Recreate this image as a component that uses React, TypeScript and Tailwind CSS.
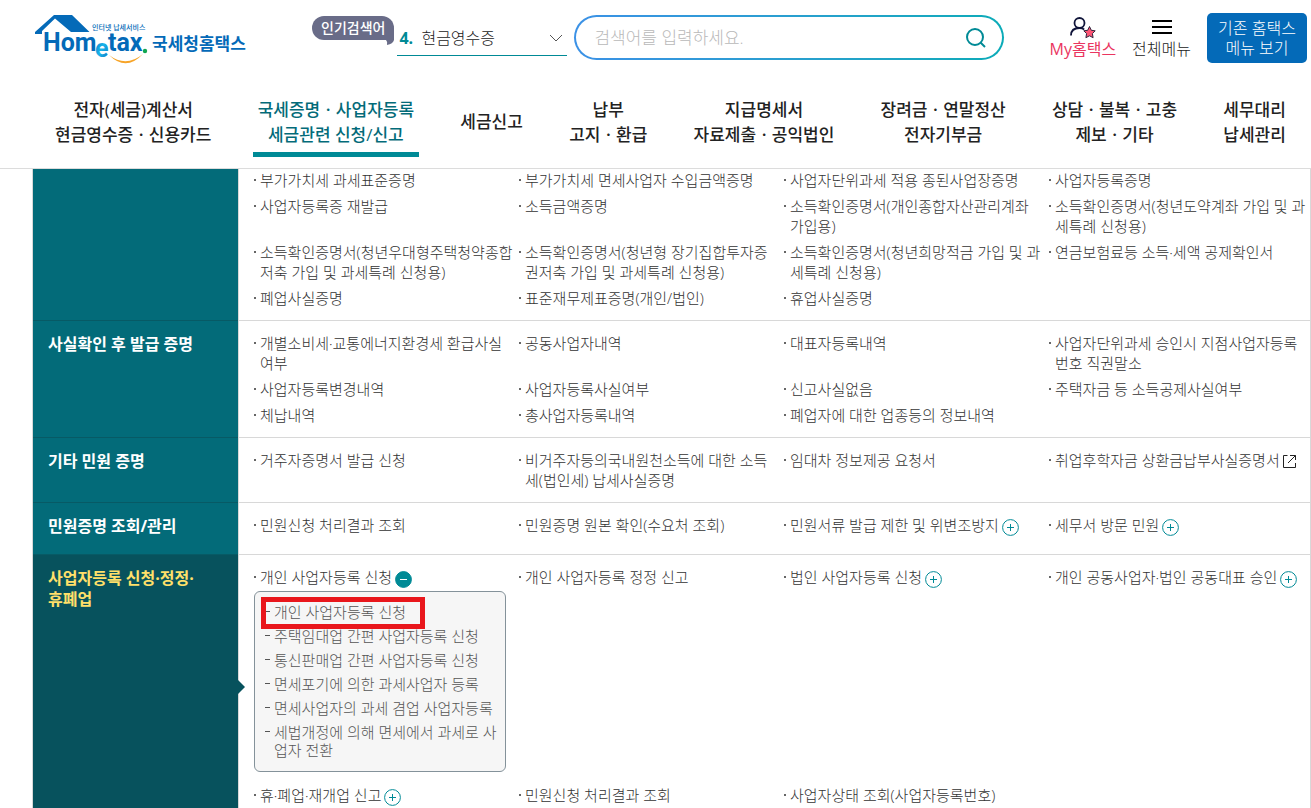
import React from 'react';

type Item = {
    label: string;
    icon?: 'plus' | 'minus' | 'external';
    children?: string[];
};

type Section = {
    title: string;
    items: Item[];
    active?: boolean;
    first?: boolean;
};

const NAV = [
    { lines: ['전자(세금)계산서', '현금영수증ㆍ신용카드'] },
    { lines: ['국세증명ㆍ사업자등록', '세금관련 신청/신고'], active: true },
    { lines: ['세금신고'] },
    { lines: ['납부', '고지ㆍ환급'] },
    { lines: ['지급명세서', '자료제출ㆍ공익법인'] },
    { lines: ['장려금ㆍ연말정산', '전자기부금'] },
    { lines: ['상담ㆍ불복ㆍ고충', '제보ㆍ기타'] },
    { lines: ['세무대리', '납세관리'] },
];

const SECTIONS: Section[] = [
    {
        title: '',
        first: true,
        items: [
            { label: '부가가치세 과세표준증명' },
            { label: '부가가치세 면세사업자 수입금액증명' },
            { label: '사업자단위과세 적용 종된사업장증명' },
            { label: '사업자등록증명' },
            { label: '사업자등록증 재발급' },
            { label: '소득금액증명' },
            { label: '소득확인증명서(개인종합자산관리계좌\n가입용)' },
            { label: '소득확인증명서(청년도약계좌 가입 및 과\n세특례 신청용)' },
            { label: '소득확인증명서(청년우대형주택청약종합\n저축 가입 및 과세특례 신청용)' },
            { label: '소득확인증명서(청년형 장기집합투자증\n권저축 가입 및 과세특례 신청용)' },
            { label: '소득확인증명서(청년희망적금 가입 및 과\n세특례 신청용)' },
            { label: '연금보험료등 소득·세액 공제확인서' },
            { label: '폐업사실증명' },
            { label: '표준재무제표증명(개인/법인)' },
            { label: '휴업사실증명' },
        ],
    },
    {
        title: '사실확인 후 발급 증명',
        items: [
            { label: '개별소비세·교통에너지환경세 환급사실\n여부' },
            { label: '공동사업자내역' },
            { label: '대표자등록내역' },
            { label: '사업자단위과세 승인시 지점사업자등록\n번호 직권말소' },
            { label: '사업자등록변경내역' },
            { label: '사업자등록사실여부' },
            { label: '신고사실없음' },
            { label: '주택자금 등 소득공제사실여부' },
            { label: '체납내역' },
            { label: '총사업자등록내역' },
            { label: '폐업자에 대한 업종등의 정보내역' },
        ],
    },
    {
        title: '기타 민원 증명',
        items: [
            { label: '거주자증명서 발급 신청' },
            { label: '비거주자등의국내원천소득에 대한 소득\n세(법인세) 납세사실증명' },
            { label: '임대차 정보제공 요청서' },
            { label: '취업후학자금 상환금납부사실증명서', icon: 'external' },
        ],
    },
    {
        title: '민원증명 조회/관리',
        items: [
            { label: '민원신청 처리결과 조회' },
            { label: '민원증명 원본 확인(수요처 조회)' },
            { label: '민원서류 발급 제한 및 위변조방지', icon: 'plus' },
            { label: '세무서 방문 민원', icon: 'plus' },
        ],
    },
    {
        title: '사업자등록 신청·정정·\n휴폐업',
        active: true,
        items: [
            {
                label: '개인 사업자등록 신청',
                icon: 'minus',
                children: [
                    '개인 사업자등록 신청',
                    '주택임대업 간편 사업자등록 신청',
                    '통신판매업 간편 사업자등록 신청',
                    '면세포기에 의한 과세사업자 등록',
                    '면세사업자의 과세 겸업 사업자등록',
                    '세법개정에 의해 면세에서 과세로 사\n업자 전환',
                ],
            },
            { label: '개인 사업자등록 정정 신고' },
            { label: '법인 사업자등록 신청', icon: 'plus' },
            { label: '개인 공동사업자·법인 공동대표 승인', icon: 'plus' },
            { label: '휴·폐업·재개업 신고', icon: 'plus' },
            { label: '민원신청 처리결과 조회' },
            { label: '사업자상태 조회(사업자등록번호)' },
        ],
    },
];

const Logo: React.FC = () => (
    <svg width="212" height="52" viewBox="35 13 212 52" role="img" aria-label="Hometax 국세청홈택스">
        <defs>
            <linearGradient id="logo-e" x1="0" y1="0" x2="1" y2="1">
                <stop offset="0" stopColor="#0a6ebd" />
                <stop offset="0.5" stopColor="#19b5ea" />
                <stop offset="1" stopColor="#0a6ebd" />
            </linearGradient>
        </defs>
        <path d="M35 32 L54 15 H72 L89.500 32 H71 L55 18.500 L42 31 V34 H35Z" fill="#046ab8" />
        <text x="92" y="30" fontSize="7" fontWeight="500" fill="#046ab8">인터넷 납세서비스</text>
        <g fontFamily="Roboto, 'Liberation Sans', sans-serif" fontWeight="700" fill="#046ab8">
            <text x="43" y="51" fontSize="25">Hom</text>
            <text x="95" y="57" fontSize="25" fill="url(#logo-e)">e</text>
            <text x="108" y="51" fontSize="25">tax</text>
        </g>
        <circle cx="145" cy="51" r="2.200" fill="#12a650" />
        <path d="M109 55 Q126 68 143 54 Q126 72 109 55Z" fill="#f7a428" />
        <text x="152" y="50" fontSize="17" fontWeight="700" fill="#046ab8">국세청홈택스</text>
    </svg>
);

const ItemIcon: React.FC<{ kind: 'plus' | 'minus' | 'external' }> = ({ kind }) => {
    if (kind === 'external') {
        return (
            <svg className="mt-1 ml-0.5 shrink-0" width="14" height="14" viewBox="0 0 14 14" fill="none" stroke="#222">
                <path d="M5.500 1.500H1.500V13.500H13.500V9M8 1.500H13.500V6M13.500 1.500L6 9" />
            </svg>
        );
    }
    const open = kind === 'minus';
    return (
        <button type="button" aria-label={open ? '닫기' : '열기'} aria-expanded={open} className="mt-1 -mb-1 ml-[3px] h-[17px] w-[17px] shrink-0">
            <svg className="block" width="17" height="17" viewBox="0 0 17 17" fill="none">
                <circle cx="8.500" cy="8.500" r="7.900" fill={open ? '#008a96' : '#fff'} stroke="#008a96" />
                <path d={open ? 'M5 8.500H12' : 'M5 8.500H12M8.500 5V12'} stroke={open ? '#fff' : '#008a96'} />
            </svg>
        </button>
    );
};

const SubMenu: React.FC<{ items: string[] }> = ({ items }) => (
    <ul className="mt-1 mr-[13px] mb-[7px] flex flex-col gap-1.5 rounded-md border border-[#84929a] bg-[#f6f6f6] pt-[11px] pb-3 pl-2.5 leading-[18px] text-[#555]">
        {items.map((label, i) => (
            <li key={label} className="relative flex">
                {/* highlighted entry */}
                {i === 0 && <span className="pointer-events-none absolute -top-1.5 -left-1 h-8 w-[164px] border-[5px] border-[#e9171c]" />}
                <span className="mt-2 mr-1 h-px w-[5px] shrink-0 bg-[#555]" />
                <a href="#" className="whitespace-pre">{label}</a>
            </li>
        ))}
    </ul>
);

const MenuItem: React.FC<{ item: Item }> = ({ item }) => (
    <li>
        <div className="flex items-start">
            <span className="mt-[9px] mr-1 h-0.5 w-0.5 shrink-0 bg-[#666]" />
            <a href="#" className="whitespace-pre leading-5">{item.label}</a>
            {item.icon && <ItemIcon kind={item.icon} />}
        </div>
        {item.children && <SubMenu items={item.children} />}
    </li>
);

const MenuSection: React.FC<{ section: Section }> = ({ section }) => (
    <section className="-mr-1 flex min-h-[52px]">
        <div
            className={
                section.active
                    ? 'relative w-[205px] shrink-0 bg-[#07525d] pt-[13px] pl-[15px] text-[#ffe06a]'
                    : 'w-[205px] shrink-0 border-b border-[#075a65] bg-[#036b79] pt-[13px] pl-[15px] text-white'
            }
        >
            <h2 className="whitespace-pre text-base leading-[21px] font-bold">{section.title}</h2>
            {section.active && (
                <svg className="absolute top-1/2 left-full -mt-[7px]" width="7" height="14" viewBox="0 0 7 14">
                    <path d="M0 0L7 7L0 14Z" fill="#07525d" />
                </svg>
            )}
        </div>
        <ul
            className={`grid min-w-0 flex-1 grid-cols-4 content-start gap-y-1.5 border-b border-l border-[#d8d8d8] pb-3 pl-[15px] text-[15px] font-light ${
                section.first ? 'pt-px' : 'pt-3'
            }`}
        >
            {section.items.map((item) => (
                <MenuItem key={item.label} item={item} />
            ))}
        </ul>
    </section>
);

const Header: React.FC = () => (
    <header className="shrink-0 border-b border-[#dcdcdc]">
        <div className="flex h-[90px] items-start pt-[13px] pr-1 pl-[35px]">
            <a href="#" className="shrink-0">
                <Logo />
            </a>

            <div className="relative mt-[3px] ml-[65px] h-6 shrink-0 rounded-full rounded-br-none bg-[#696c88] px-[9px] text-sm leading-6 font-medium whitespace-nowrap text-white">
                <label htmlFor="keyword">인기검색어</label>
                <svg className="absolute top-full right-0" width="8" height="5" viewBox="0 0 8 5">
                    <path d="M0 0H8Q7 4 1 5Q2 2 0 0Z" fill="#696c88" />
                </svg>
            </div>

            {/* popular keyword */}
            <div className="relative mt-2 ml-[3px] flex h-[35px] w-[170px] shrink-0 items-center border-b border-[#008a96] pl-0.5">
                <span className="w-[22px] text-base font-bold text-[#008a96]">4.</span>
                <select id="keyword" className="h-full flex-1 appearance-none bg-transparent text-base font-light text-[#222]">
                    <option>현금영수증</option>
                </select>
                <svg className="pointer-events-none absolute right-1 h-2 w-[14px]" viewBox="0 0 14 8" fill="none" stroke="#555">
                    <path d="M1 1L7 7L13 1" />
                </svg>
            </div>

            <form className="mt-0.5 ml-[7px] flex-1 rounded-full bg-linear-to-r from-[#3b91e6] to-[#0aabb8] p-0.5" onSubmit={(e) => e.preventDefault()}>
                <div className="flex h-[41px] items-center rounded-full bg-white pr-4 pl-[18px]">
                    <input
                        type="search"
                        aria-label="검색어"
                        placeholder="검색어를 입력하세요."
                        className="min-w-0 flex-1 text-[17px] font-light outline-none placeholder:text-[#b9b9b9]"
                    />
                    <button type="submit" aria-label="검색">
                        <svg width="20" height="20" viewBox="0 0 20 20" fill="none" stroke="#008a96" strokeWidth="2">
                            <circle cx="9" cy="9" r="8" />
                            <path d="M14.500 14.500L19 19" />
                        </svg>
                    </button>
                </div>
            </form>

            <nav className="ml-[46px] flex shrink-0 items-start whitespace-nowrap">
                <a href="#" className="flex flex-col items-center text-base leading-5 text-[#ea3560]">
                    <svg className="mt-1" width="26" height="22" viewBox="0 0 26 22" fill="none">
                        <circle cx="9.500" cy="6" r="5" stroke="#10153a" strokeWidth="1.800" />
                        <path d="M1 18.500C1 13.500 4.500 11 9.500 11C11.500 11 13 11.500 14.200 12.500" stroke="#10153a" strokeWidth="1.800" />
                        <path d="M19.500 9.500L21.300 13.300L25.200 13.800L22.400 16.600L23.100 20.700L19.500 18.800L15.900 20.700L16.600 16.600L13.800 13.800L17.700 13.300Z" fill="#ff5575" stroke="#31253d" />
                    </svg>
                    My홈택스
                </a>
                <a href="#" className="ml-4 flex flex-col items-center text-base leading-5 font-light text-[#222]">
                    <svg className="mt-1.5 mb-1" width="20" height="16" viewBox="0 0 20 16" stroke="#000" strokeWidth="2">
                        <path d="M0 2H20M0 8H20M0 14H20" />
                    </svg>
                    전체메뉴
                </a>
                <button type="button" className="ml-4 h-[50px] w-[100px] rounded-[5px] bg-[#046ab8] text-base leading-5 font-light text-white">
                    기존 홈택스
                    <br />
                    메뉴 보기
                </button>
            </nav>
        </div>

        <nav className="flex h-[78px] items-start justify-between pr-5 pl-[50px] text-[17px] leading-[25px] font-medium text-[#222]">
            {NAV.map(({ lines, active }) => (
                <a
                    key={lines[0]}
                    href="#"
                    className={`flex h-[67px] flex-col items-center whitespace-nowrap px-[5px] ${
                        active ? 'border-b-[5px] border-[#008a96] pt-[7px] text-[#036b79]' : lines.length === 1 ? 'pt-[19px]' : 'pt-[7px]'
                    }`}
                >
                    {lines.map((line) => (
                        <span key={line}>{line}</span>
                    ))}
                </a>
            ))}
        </nav>
    </header>
);

export default function App() {
    return (
        <div className="flex h-screen flex-col overflow-hidden bg-white font-['Open_Sans','Noto_Sans_CJK_KR',sans-serif] text-[#333]">
            <Header />
            <main className="ml-8 min-h-0 flex-1 overflow-hidden border-x border-[#d8d8d8]">
                {SECTIONS.map((section) => (
                    <MenuSection key={section.title} section={section} />
                ))}
            </main>
        </div>
    );
}
